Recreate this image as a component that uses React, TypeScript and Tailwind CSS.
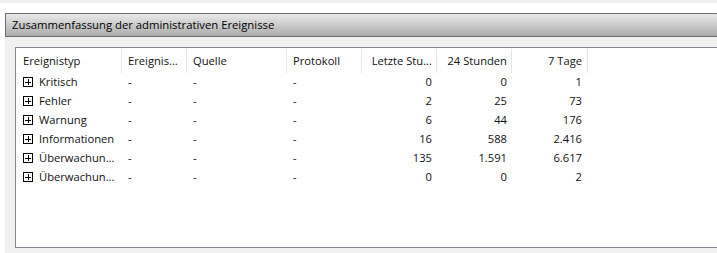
import React from "react";

const rows = [
  { name: "Kritisch", a: "0", b: "0", c: "1" },
  { name: "Fehler", a: "2", b: "25", c: "73" },
  { name: "Warnung", a: "6", b: "44", c: "176" },
  { name: "Informationen", a: "16", b: "588", c: "2.416" },
  { name: "Überwachun...", a: "135", b: "1.591", c: "6.617" },
  { name: "Überwachun...", a: "0", b: "0", c: "2" },
];

function PlusBox() {
  return (
    <svg width="10" height="10" viewBox="0 0 10 10" className="shrink-0" shapeRendering="crispEdges">
      <rect x="0.5" y="0.5" width="9" height="9" fill="white" stroke="#000" strokeWidth="1" />
      <line x1="2" y1="5" x2="8" y2="5" stroke="#000" strokeWidth="1" />
      <line x1="5" y1="2" x2="5" y2="8" stroke="#000" strokeWidth="1" />
    </svg>
  );
}

const cols = "grid grid-cols-[106px_65px_100px_75px_75px_75px_76px]";

export default function App() {
  return (
    <div
      className="w-[717px] h-[253px] overflow-hidden bg-white text-[11.2px] text-[#111]"
      style={{ fontFamily: '"Open Sans", "Noto Sans", sans-serif' }}
    >
      <div className="h-[3px] bg-[#f0f0f0]" />
      <div className="h-[10px] bg-white" />
      <div className="flex">
        <div className="w-[5px] shrink-0 bg-white" />
        <div className="w-[720px] shrink-0 flex flex-col">
          <div className="h-[24px] border-y border-l border-[#6d6d6d] bg-[linear-gradient(to_bottom,#e9e9e9,#acacac)] flex items-center pl-[6px] text-[11.3px] leading-none text-black">
            Zusammenfassung der administrativen Ereignisse
          </div>
          <div className="bg-[#f0f0f0] pt-[10px] pl-[10px] pb-[6px]">
            <div className="h-[201px] border-y border-l border-[#828790] bg-white">
              <div className={`${cols} pt-[1px]`}>
                <div className="h-[24px] border-r border-[#e5e5e5] pl-[7px] flex items-center">Ereignistyp</div>
                <div className="h-[24px] border-r border-[#e5e5e5] pl-[6px] flex items-center">Ereignis...</div>
                <div className="h-[24px] border-r border-[#e5e5e5] pl-[6px] flex items-center">Quelle</div>
                <div className="h-[24px] border-r border-[#e5e5e5] pl-[6px] flex items-center">Protokoll</div>
                <div className="h-[24px] border-r border-[#e5e5e5] pr-[4px] flex items-center justify-end">Letzte Stu...</div>
                <div className="h-[24px] border-r border-[#e5e5e5] pr-[4px] flex items-center justify-end">24 Stunden</div>
                <div className="h-[24px] border-r border-[#e5e5e5] pr-[5px] flex items-center justify-end">7 Tage</div>
              </div>
              {rows.map((r, i) => (
                <div key={i} className={`${cols} h-[19px] items-center`}>
                  <div className="pl-[7px] flex items-center gap-[6px]">
                    <PlusBox />
                    <span>{r.name}</span>
                  </div>
                  <div className="pl-[6px]">-</div>
                  <div className="pl-[6px]">-</div>
                  <div className="pl-[6px]">-</div>
                  <div className="pr-[5px] text-right">{r.a}</div>
                  <div className="pr-[5px] text-right">{r.b}</div>
                  <div className="pr-[6px] text-right">{r.c}</div>
                </div>
              ))}
            </div>
          </div>
        </div>
      </div>
    </div>
  );
}
